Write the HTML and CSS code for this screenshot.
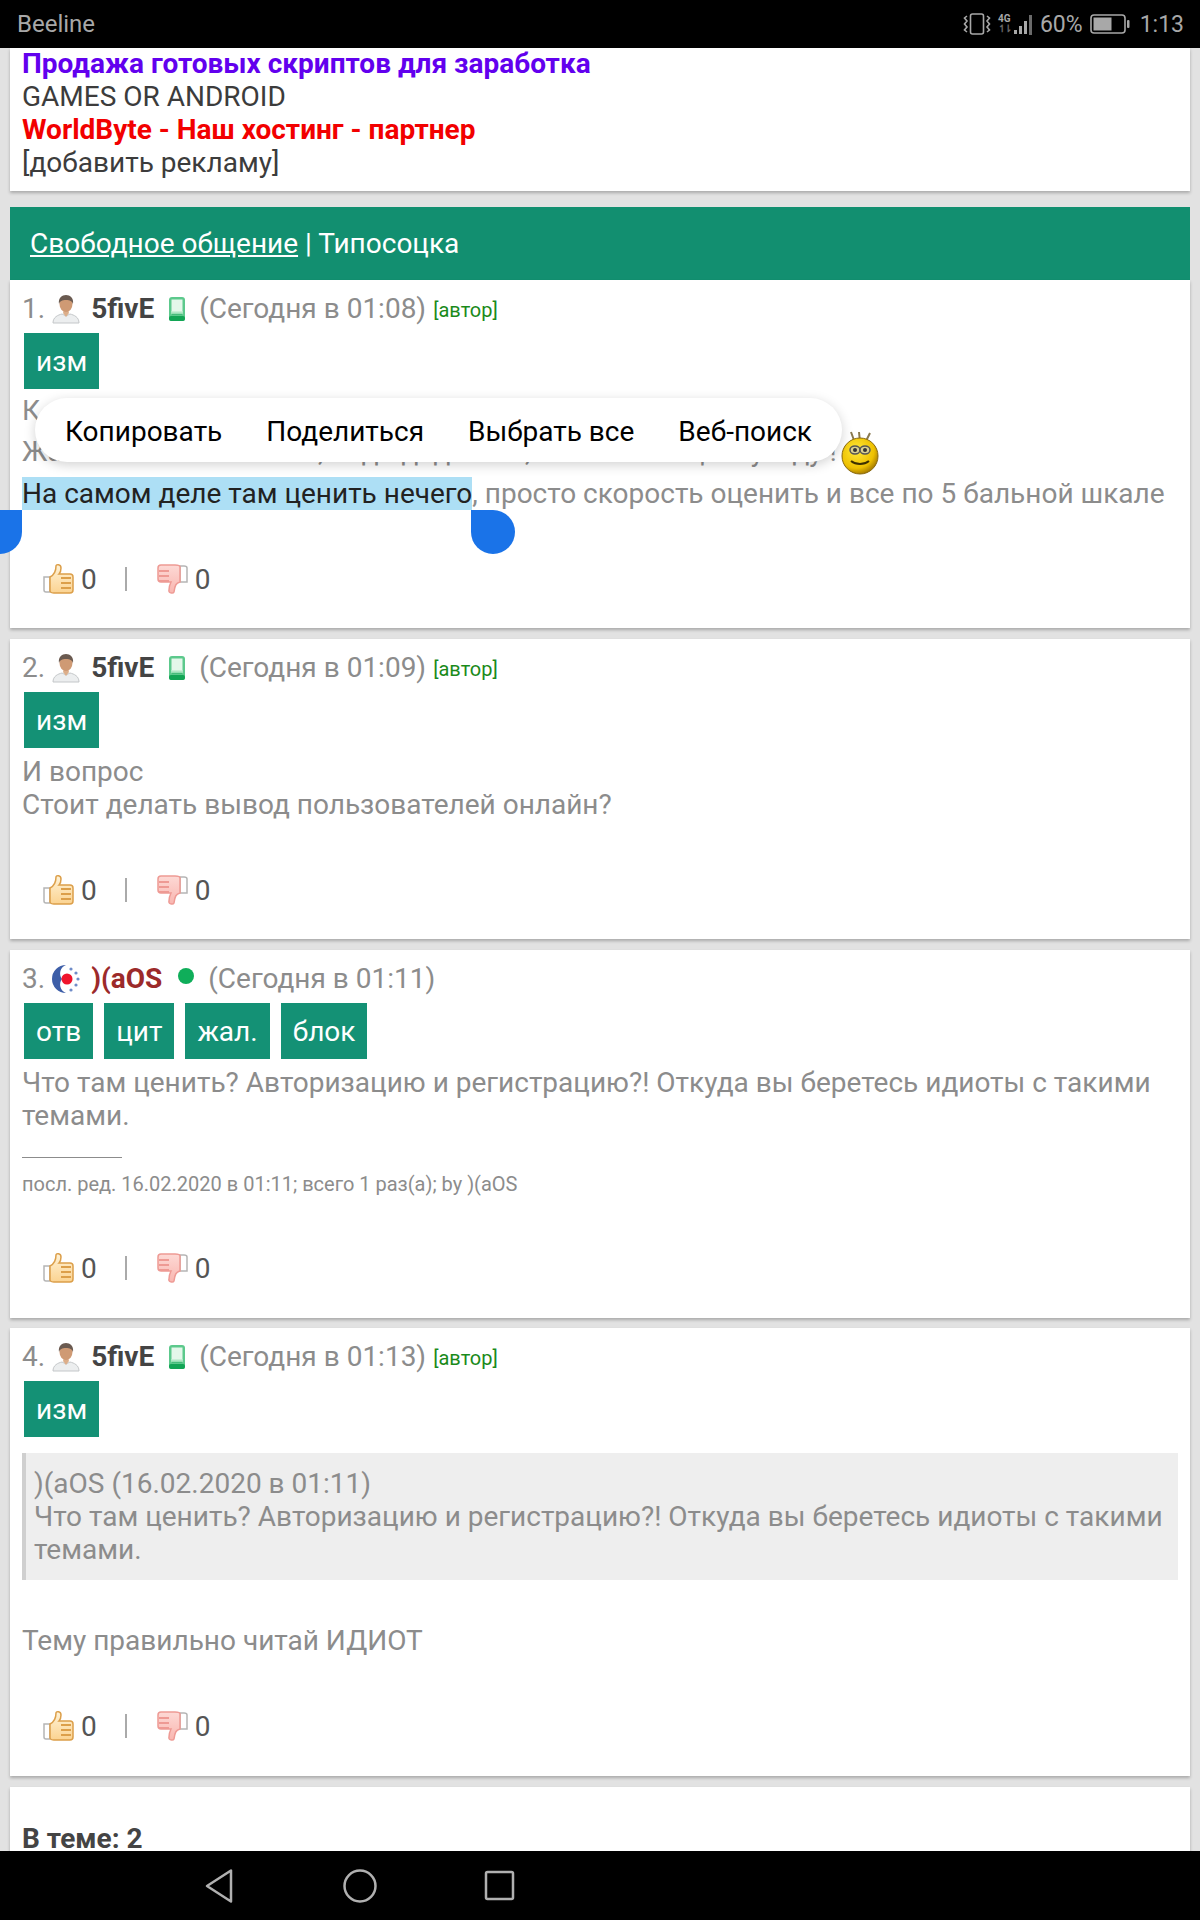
FILE: index.html
```html
<!DOCTYPE html>
<html lang="ru">
<head>
    <meta charset="UTF-8">
    <title>Свободное общение | Типосоцка</title>
    <link rel="stylesheet" href="styles.css">
</head>
<body>
    <svg class="defs" width="0" height="0">
        <defs>
            <linearGradient id="upFill" x1="0" y1="0" x2="0" y2="1"><stop offset="0" stop-color="#fff3d8"/><stop offset="1" stop-color="#fbd391"/></linearGradient>
            <linearGradient id="downFill" x1="0" y1="0" x2="0" y2="1"><stop offset="0" stop-color="#fdd9d5"/><stop offset="1" stop-color="#f9b6b0"/></linearGradient>
            <radialGradient id="smileFill" cx="0.4" cy="0.35" r="0.7"><stop offset="0" stop-color="#ffe93a"/><stop offset="0.7" stop-color="#eec000"/><stop offset="1" stop-color="#9a7000"/></radialGradient>
            <linearGradient id="phoneFill" x1="0" y1="0" x2="0" y2="1"><stop offset="0" stop-color="#d5f2df"/><stop offset="0.7" stop-color="#8edcae"/><stop offset="1" stop-color="#12a555"/></linearGradient>
            <symbol id="user" viewBox="0 0 30 30">
                <path d="M2 29c0-6 5-8 9-9l4 2 4-2c4 1 9 3 9 9z" fill="#eceeef" stroke="#c4c7c9"/>
                <path d="M12 19l3 4 3-4-1-3h-4z" fill="#dcae8a"/>
                <ellipse cx="15" cy="10" rx="6.5" ry="8" fill="#cf9a74"/>
                <path d="M8 10c-1-6 3-9 7-9s8 3 7 9c-1-3-3-4-7-4s-6 1-7 4z" fill="#6a5a50"/>
            </symbol>
            <symbol id="phone" viewBox="0 0 18 26">
                <rect x="1" y="1" width="16" height="24" rx="3" fill="#5cc98c"/>
                <rect x="3.500" y="3.500" width="11" height="15" fill="#e4f7ea"/>
                <rect x="3.500" y="15" width="11" height="4" fill="url(#phoneFill)"/>
                <rect x="1" y="20" width="16" height="5" rx="2" fill="#12a555"/>
            </symbol>
            <symbol id="thumbUp" viewBox="0 0 32 32">
                <path d="M2 14h6v15H4c-2 0-2-1-2-2z" fill="#fff" stroke="#b5b5b5" stroke-width="1.5"/>
                <path d="M8 14c4-2 6-5 6-11 0-2 5-2 5 2 0 3-1 5-2 6h11c2 0 3 1 3 3v13c0 2-1 3-3 3H12c-2 0-4-1-4-2z" fill="url(#upFill)" stroke="#dc9f4a" stroke-width="1.5"/>
                <path d="M19 15h10M19 20h10M19 25h10" stroke="#dc9f4a" stroke-width="2"/>
            </symbol>
            <symbol id="thumbDown" viewBox="0 0 32 32">
                <path d="M24 3h4c2 0 3 1 3 2v14h-7z" fill="#fff" stroke="#b5b5b5" stroke-width="1.5"/>
                <path d="M24 19c-4 1-5 3-6 10-1 2-6 1-5-2 0-3 1-6 2-8H5c-2 0-3-1-3-3V5c0-2 1-3 3-3h14c3 0 5 0 5 2z" fill="url(#downFill)" stroke="#ee9a94" stroke-width="1.5"/>
                <path d="M3 8h10M3 13h10M3 18h10" stroke="#ee9a94" stroke-width="2"/>
            </symbol>
        </defs>
    </svg>

    <div class="phone">
        <header class="status-bar">
            <span class="carrier">Beeline</span>
            <div class="status-right">
                <svg class="ic-vibrate" width="28" height="22" viewBox="0 0 28 22" fill="none" stroke="#a8a8a8" stroke-width="1.6">
                    <rect x="7.5" y="1" width="13" height="20" rx="2"/>
                    <path d="M4 3l-2.500 2 2.500 3-2.500 3 2.500 3-2.500 3 2.500 2M24 3l2.500 2-2.500 3 2.500 3-2.500 3 2.500 3-2.500 2"/>
                </svg>
                <div class="net">
                    <span class="net-top">4G</span>
                    <span class="net-arrows">↿⇂</span>
                </div>
                <svg class="ic-signal" width="20" height="21" viewBox="0 0 20 21" fill="#a8a8a8">
                    <rect x="0" y="16" width="3" height="4"/><rect x="5" y="12" width="3" height="8"/><rect x="10" y="7" width="3" height="13"/><rect x="15" y="1" width="3" height="20" fill="#6a6a6a"/>
                </svg>
                <span class="pct">60%</span>
                <svg class="ic-battery" width="40" height="20" viewBox="0 0 40 20">
                    <rect x="1" y="1" width="34" height="18" rx="3" fill="none" stroke="#a8a8a8" stroke-width="1.6"/>
                    <rect x="3.500" y="3.500" width="18" height="13" fill="#a8a8a8"/>
                    <rect x="37" y="6" width="2.500" height="8" rx="1" fill="#a8a8a8"/>
                </svg>
                <span class="clock">1:13</span>
            </div>
        </header>

        <main class="page">
            <section class="card ads">
                <a class="ad ad-purple">Продажа готовых скриптов для заработка</a>
                <a class="ad">GAMES OR ANDROID</a>
                <a class="ad ad-red">WorldByte - Наш хостинг - партнер</a>
                <a class="ad">[добавить рекламу]</a>
            </section>

            <div class="topic-head"><a class="topic-link">Свободное общение</a> | Типосоцка</div>

            <article class="card post">
                <div class="post-head">
                    <span>1.</span>
                    <svg class="avatar"><use href="#user"/></svg>
                    <b class="nick">5fivE</b>
                    <svg class="device"><use href="#phone"/></svg>
                    <span class="date">(Сегодня в 01:08)</span>
                    <span class="author">[автор]</span>
                </div>
                <div class="actions"><a class="btn">изм</a></div>
                <div class="body body-first">
                    К сожалению, сайт пока сырой<br>
                    Жаль только что мало, надо доделать, но всё же оценку жду !<svg class="smile" width="38" height="44" viewBox="0 0 38 44">
                        <path d="M14 12L10 1M19 11l-1-10M24 12l5-10" stroke="#8a7a50" stroke-width="2" fill="none"/>
                        <circle cx="19" cy="25" r="18" fill="url(#smileFill)" stroke="#8a6a10"/>
                        <ellipse cx="14" cy="19" rx="5" ry="4" fill="#d9cf90" stroke="#555" stroke-width="1.500"/>
                        <ellipse cx="24" cy="19" rx="5" ry="4" fill="#d9cf90" stroke="#555" stroke-width="1.500"/>
                        <circle cx="14" cy="19" r="2" fill="#333"/><circle cx="24" cy="19" r="2" fill="#333"/>
                        <path d="M10 30c5 4 13 4 18 0" stroke="#3d3000" stroke-width="2" fill="none"/>
                    </svg>
                    <br>
                    <span class="selected">На самом деле там ценить нечего</span>, просто скорость оценить и все по 5 бальной шкале
                </div>
                <div class="votes">
                    <svg class="thumb"><use href="#thumbUp"/></svg><span>0</span>
                    <i class="vote-sep"></i>
                    <svg class="thumb"><use href="#thumbDown"/></svg><span>0</span>
                </div>
            </article>

            <article class="card post">
                <div class="post-head">
                    <span>2.</span>
                    <svg class="avatar"><use href="#user"/></svg>
                    <b class="nick">5fivE</b>
                    <svg class="device"><use href="#phone"/></svg>
                    <span class="date">(Сегодня в 01:09)</span>
                    <span class="author">[автор]</span>
                </div>
                <div class="actions"><a class="btn">изм</a></div>
                <div class="body">И вопрос<br>Стоит делать вывод пользователей онлайн?</div>
                <div class="votes">
                    <svg class="thumb"><use href="#thumbUp"/></svg><span>0</span>
                    <i class="vote-sep"></i>
                    <svg class="thumb"><use href="#thumbDown"/></svg><span>0</span>
                </div>
            </article>

            <article class="card post post-edited">
                <div class="post-head">
                    <span>3.</span>
                    <svg class="avatar" viewBox="0 0 30 30">
                        <path d="M15 1a14 14 0 1 0 0 28 9 9 0 0 1-4-14 9 9 0 0 1 4-14z" fill="#3d5ea8"/>
                        <circle cx="16" cy="15" r="5.500" fill="#f0142c"/>
                        <g fill="#6f8cc8"><circle cx="20" cy="5" r="1.600"/><circle cx="25" cy="9" r="1.600"/><circle cx="27" cy="15" r="1.600"/><circle cx="25" cy="21" r="1.600"/><circle cx="20" cy="26" r="1.600"/></g>
                    </svg>
                    <b class="nick nick-red">)(aOS</b>
                    <i class="online"></i>
                    <span class="date">(Сегодня в 01:11)</span>
                </div>
                <div class="actions">
                    <a class="btn">отв</a>
                    <a class="btn">цит</a>
                    <a class="btn">жал.</a>
                    <a class="btn">блок</a>
                </div>
                <div class="body">Что там ценить? Авторизацию и регистрацию?! Откуда вы беретесь идиоты с такими темами.</div>
                <div class="edit-line"></div>
                <div class="edit-note">посл. ред. 16.02.2020 в 01:11; всего 1 раз(а); by )(aOS</div>
                <div class="votes votes-edited">
                    <svg class="thumb"><use href="#thumbUp"/></svg><span>0</span>
                    <i class="vote-sep"></i>
                    <svg class="thumb"><use href="#thumbDown"/></svg><span>0</span>
                </div>
            </article>

            <article class="card post">
                <div class="post-head">
                    <span>4.</span>
                    <svg class="avatar"><use href="#user"/></svg>
                    <b class="nick">5fivE</b>
                    <svg class="device"><use href="#phone"/></svg>
                    <span class="date">(Сегодня в 01:13)</span>
                    <span class="author">[автор]</span>
                </div>
                <div class="actions"><a class="btn">изм</a></div>
                <blockquote class="quote">)(aOS (16.02.2020 в 01:11)<br>Что там ценить? Авторизацию и регистрацию?! Откуда вы беретесь идиоты с такими темами.</blockquote>
                <div class="body body-reply">Тему правильно читай ИДИОТ</div>
                <div class="votes votes-reply">
                    <svg class="thumb"><use href="#thumbUp"/></svg><span>0</span>
                    <i class="vote-sep"></i>
                    <svg class="thumb"><use href="#thumbDown"/></svg><span>0</span>
                </div>
            </article>

            <section class="card topic-foot"><b>В теме: 2</b></section>
        </main>

        <nav class="nav-bar">
            <svg width="36" height="36" viewBox="0 0 36 36" fill="none" stroke="#b0b0b0" stroke-width="2.500" stroke-linejoin="round"><path d="M29 2.500V33.500L5 18z"/></svg>
            <svg width="36" height="36" viewBox="0 0 36 36" fill="none" stroke="#b0b0b0" stroke-width="2.500"><circle cx="18" cy="18" r="15.500"/></svg>
            <svg width="36" height="36" viewBox="0 0 36 36" fill="none" stroke="#b0b0b0" stroke-width="2.500" stroke-linejoin="round"><rect x="4" y="4" width="27" height="27" rx="1.500"/></svg>
        </nav>

        <!-- text selection overlay -->
        <div class="sel-menu">
            <span>Копировать</span>
            <span>Поделиться</span>
            <span>Выбрать все</span>
            <span>Веб-поиск</span>
        </div>
        <i class="sel-handle sel-left"></i>
        <i class="sel-handle sel-right"></i>
    </div>
</body>
</html>
```

FILE: styles.css
```css
* {
    box-sizing: border-box;
}
body {
    margin: 0;
    background-color: #e2e2e2;
    font-family: Roboto, "Noto Sans", sans-serif;
    font-size: 28px;
    line-height: 33px;
    color: #8c8c8c;
}
.defs {
    position: absolute;
}
.phone {
    position: relative;
    display: flex;
    flex-direction: column;
    width: 1200px;
    height: 1920px;
    overflow: hidden;
}

/* status bar */
.status-bar {
    flex: none;
    display: flex;
    align-items: center;
    justify-content: space-between;
    height: 48px;
    padding: 0 16px 0 17px;
    background-color: #000;
    color: #a8a8a8;
    font-size: 24px;
}
.status-right {
    display: flex;
    align-items: center;
}
.ic-vibrate {
    margin-right: 7px;
}
.net {
    display: flex;
    flex-direction: column;
    width: 16px;
    font-size: 10px;
    line-height: 10px;
    font-weight: 700;
}
.net-arrows {
    color: #666;
    letter-spacing: -2px;
}
.ic-signal {
    margin-right: 6px;
}
.pct {
    margin-right: 7px;
    font-size: 23px;
}
.ic-battery {
    margin-right: 10px;
}
.clock {
    font-size: 23px;
}

/* page */
.page {
    flex: 1;
    min-height: 0;
    overflow: hidden;
    padding: 0 10px;
}
.card {
    background-color: #fff;
    box-shadow: 0 2px 3px rgba(0, 0, 0, 0.25);
}
.ads {
    display: flex;
    flex-direction: column;
    height: 143px;
    padding: 0 12px;
    color: #3c3c3c;
}
.ad-purple {
    margin-top: -1px;
    color: #6200ee;
    font-weight: 700;
}
.ad-red {
    color: #f20000;
    font-weight: 700;
}
.topic-head {
    height: 73px;
    margin-top: 16px;
    padding: 20px 20px 0;
    background-color: #128f70;
    color: #fff;
}
.topic-link {
    text-decoration: underline;
}

/* posts */
.post {
    margin-bottom: 11px;
    padding: 12px 12px 0;
    overflow: hidden;
}
.post-edited {
    margin-bottom: 10px;
}
.post-head {
    display: flex;
    align-items: center;
    height: 33px;
}
.avatar {
    width: 30px;
    height: 30px;
    margin: 0 10px 0 6px;
}
.nick {
    color: #444;
}
.nick-red {
    color: #9c2a2a;
}
.device {
    width: 18px;
    height: 26px;
    margin: 0 13px 0 14px;
}
.online {
    width: 16px;
    height: 16px;
    margin: -6px 14px 0 16px;
    border-radius: 50%;
    background-color: #0fae5a;
}
.author {
    margin: 4px 0 0 7px;
    font-size: 20px;
    color: #1a8a1a;
}
.actions {
    display: flex;
    gap: 11px;
    margin: 8px 0 0 2px;
}
.btn {
    display: block;
    height: 56px;
    padding: 12px 12px 0;
    background-color: #149175;
    color: #fff;
}
.body {
    margin-top: 7px;
}
.body-first {
    margin-top: 5px;
}
.smile {
    margin: 4px 0 2px 4px;
    vertical-align: -16px;
}
.selected {
    background-color: #addff5;
    color: #222;
}
.votes {
    display: flex;
    align-items: center;
    height: 38px;
    margin: 50px 0 30px 20px;
    color: #555;
}
.votes-edited {
    margin: 48px 0 31px 20px;
}
.votes-reply {
    margin: 50px 0 31px 20px;
}
.thumb {
    width: 32px;
    height: 32px;
    margin-right: 7px;
}
.vote-sep {
    width: 2px;
    height: 24px;
    margin: 0 29px 0 28px;
    background-color: #aaa;
}
.edit-line {
    width: 100px;
    height: 1px;
    margin-top: 25px;
    background-color: #8c8c8c;
}
.edit-note {
    margin-top: 10px;
    font-size: 20px;
}
.quote {
    height: 127px;
    margin: 16px 0 0;
    padding: 14px 8px 0 8px;
    border-left: 4px solid #cfcfcf;
    background-color: #eee;
}
.body-reply {
    margin-top: 44px;
}
.topic-foot {
    height: 120px;
    padding: 35px 12px 0;
    color: #444;
}

/* nav bar */
.nav-bar {
    flex: none;
    display: flex;
    align-items: center;
    gap: 104px;
    height: 69px;
    padding-left: 202px;
    background-color: #000;
}

/* selection overlay */
.sel-menu {
    position: absolute;
    top: 398px;
    left: 35px;
    display: flex;
    gap: 44px;
    align-items: center;
    width: 807px;
    height: 64px;
    padding: 2px 30px 0;
    border-radius: 32px;
    background-color: #fff;
    box-shadow: 0 3px 12px rgba(0, 0, 0, 0.18);
    color: #000;
}
.sel-handle {
    position: absolute;
    top: 510px;
    width: 44px;
    height: 44px;
    background-color: #1a73e8;
}
.sel-left {
    left: -22px;
    border-radius: 50% 0 50% 50%;
}
.sel-right {
    left: 471px;
    border-radius: 0 50% 50% 50%;
}
```
